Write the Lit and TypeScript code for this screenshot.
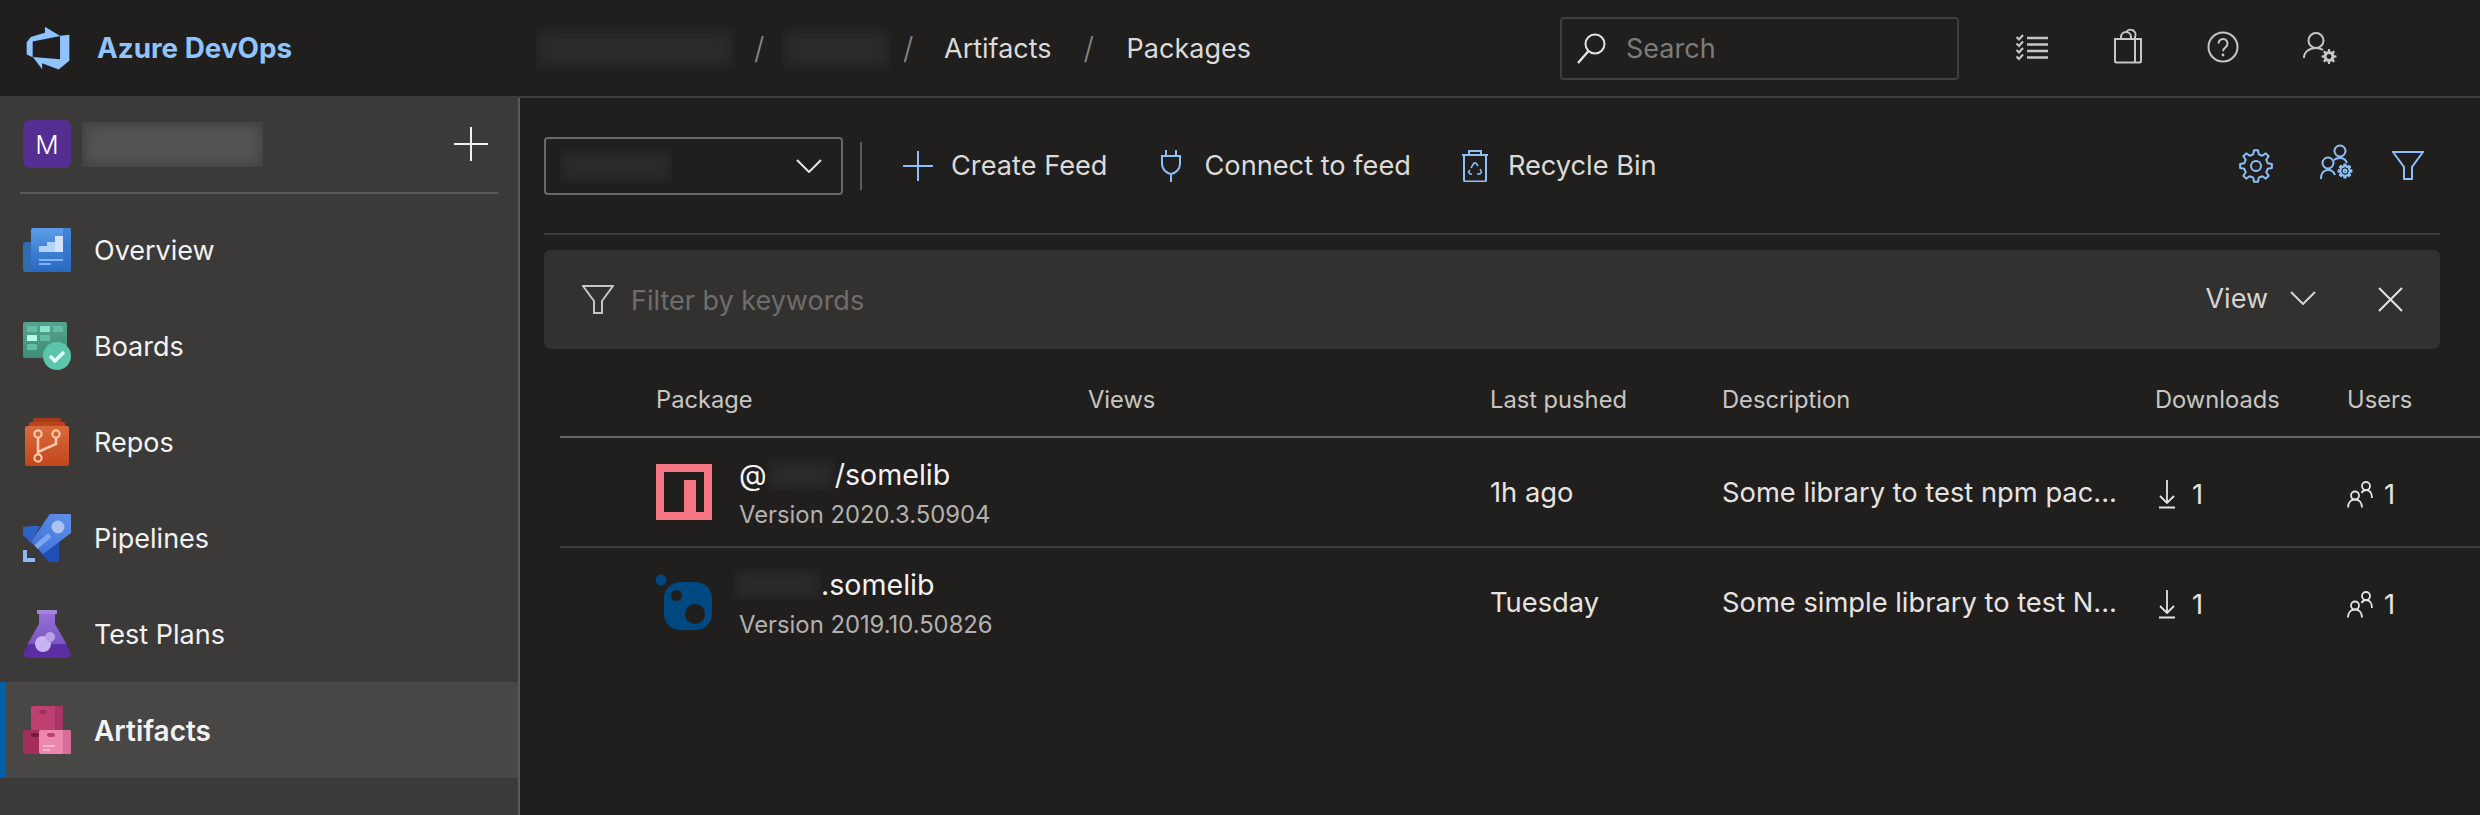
import { LitElement, css, html, svg } from 'lit';
import { customElement } from 'lit/decorators.js';

// outline of a cog, used by the settings style icons
function gear(cx: number, cy: number, outer: number, inner: number, teeth: number) {
  const step = (Math.PI * 2) / teeth;
  let d = '';
  for (let i = 0; i < teeth; i++) {
    const a = i * step - Math.PI / 2;
    const pts: [number, number][] = [
      [a - step * 0.3, inner],
      [a - step * 0.16, outer],
      [a + step * 0.16, outer],
      [a + step * 0.3, inner],
    ];
    for (const [ang, r] of pts) {
      d += `${d ? 'L' : 'M'}${(cx + Math.cos(ang) * r).toFixed(2)} ${(cy + Math.sin(ang) * r).toFixed(2)}`;
    }
  }
  return d + 'Z';
}

const overviewIcon = svg`
  <svg width="48" height="48" viewBox="0 0 48 48">
    <defs><linearGradient id="ov" x1="0" y1="0" x2="0" y2="1"><stop offset="0" stop-color="#5b9de8"/><stop offset="1" stop-color="#2867c0"/></linearGradient></defs>
    <rect x="0" y="16" width="14" height="30" rx="3" fill="#2f6db2"/>
    <rect x="8" y="2" width="40" height="44" rx="2" fill="url(#ov)"/>
    <path d="M40 2h6a2 2 0 0 1 2 2v40a2 2 0 0 1-2 2h-6z" fill="#2f6fc4" opacity=".55"/>
    <path d="M16 20h8v-4h8v-6h8v16H16z" fill="#b4d3f8"/>
    <path d="M32 10h8v16h-8z" fill="#cfe3fb"/>
    <rect x="16" y="33" width="24" height="2" fill="#7fb2ef"/>
    <rect x="16" y="37" width="12" height="2" fill="#7fb2ef"/>
  </svg>`;

const boardsIcon = svg`
  <svg width="48" height="48" viewBox="0 0 48 48">
    <defs><linearGradient id="bo" x1="0" y1="0" x2="0" y2="1"><stop offset="0" stop-color="#56a48e"/><stop offset="1" stop-color="#3f8d78"/></linearGradient></defs>
    <rect x="0" y="0" width="44" height="36" rx="2" fill="url(#bo)"/>
    <rect x="4" y="4" width="10" height="6" fill="#62bba4"/>
    <rect x="17" y="4" width="10" height="6" fill="#8ae3cf"/>
    <rect x="30" y="4" width="10" height="6" fill="#62bba4"/>
    <rect x="4" y="13" width="10" height="6" fill="#b2fbe9"/>
    <rect x="17" y="13" width="10" height="6" fill="#62bba4"/>
    <rect x="4" y="22" width="10" height="6" fill="#62bba4"/>
    <circle cx="34" cy="34" r="14" fill="#5cc5ac"/>
    <path d="M27 34l5 5 9-9" fill="none" stroke="#e4fbf4" stroke-width="3.4"/>
  </svg>`;

const reposIcon = svg`
  <svg width="48" height="48" viewBox="0 0 48 48">
    <defs><linearGradient id="re" x1="0" y1="0" x2="0" y2="1"><stop offset="0" stop-color="#d96a3c"/><stop offset="1" stop-color="#c2461c"/></linearGradient></defs>
    <rect x="10" y="0" width="28" height="8" rx="2" fill="#a63b19"/>
    <rect x="6" y="4" width="36" height="8" rx="2" fill="#b8451e"/>
    <rect x="2" y="8" width="44" height="40" rx="2" fill="url(#re)"/>
    <g fill="none" stroke="#f7c6aa" stroke-width="2.2">
      <circle cx="15" cy="16" r="3.6"/>
      <circle cx="33" cy="16" r="3.6"/>
      <circle cx="15" cy="40" r="3.6"/>
      <path d="M15 20v16M33 20v6l-18 8" stroke-width="2.6"/>
    </g>
  </svg>`;

const pipelinesIcon = svg`
  <svg width="48" height="48" viewBox="0 0 48 48">
    <defs><linearGradient id="pi" x1="1" y1="0" x2="0" y2="1"><stop offset="0" stop-color="#5e8fe8"/><stop offset="1" stop-color="#3f72d8"/></linearGradient></defs>
    <path d="M0 13l9-1h8L8 29 0 21z" fill="#2f62c6"/>
    <path d="M17 38l19-18v27a1 1 0 0 1-1 1H26z" fill="#1f50b8"/>
    <path d="M26 1a3 3 0 0 1 2-1h19a1 1 0 0 1 1 1v18L20 40 8 28z" fill="url(#pi)"/>
    <circle cx="35" cy="13" r="6.5" fill="#a9c4f4"/>
    <path d="M13 33l14-12" stroke="#7ea5ee" stroke-width="5"/>
    <path d="M0 36h4v8h8v4H0z" fill="#93b5f3"/>
  </svg>`;

const testIcon = svg`
  <svg width="48" height="48" viewBox="0 0 48 48">
    <defs><linearGradient id="te" x1="0" y1="0" x2="0" y2="1"><stop offset="0" stop-color="#9473d4"/><stop offset="1" stop-color="#7a53c2"/></linearGradient></defs>
    <path d="M16 3h16v11l12 21H4L16 14z" fill="url(#te)"/>
    <rect x="14" y="0" width="20" height="4" fill="#a184dc"/>
    <path d="M5 34h38l4 7a4.500 4.500 0 0 1-4 7H5a4.500 4.500 0 0 1-4-7z" fill="#5b2da2"/>
    <circle cx="20" cy="34" r="8" fill="#c9b4f1"/>
    <circle cx="27" cy="27" r="5" fill="#b8a0e9"/>
  </svg>`;

const artifactsIcon = svg`
  <svg width="48" height="48" viewBox="0 0 48 48">
    <rect x="8" y="0" width="32" height="25" rx="2" fill="#bd4071"/>
    <path d="M32 0h6a2 2 0 0 1 2 2v23h-8z" fill="#a73565"/>
    <rect x="16" y="4" width="8" height="4" rx="2" fill="#9c2f5c"/>
    <rect x="0" y="24" width="20" height="24" rx="2" fill="#a42d5c"/>
    <rect x="8" y="27" width="8" height="4" rx="2" fill="#701c40"/>
    <rect x="16" y="24" width="32" height="24" rx="2" fill="#ec87b0"/>
    <path d="M40 24h6a2 2 0 0 1 2 2v20a2 2 0 0 1-2 2h-6z" fill="#da6c9a"/>
    <rect x="24" y="27" width="8" height="4" rx="2" fill="#b9406f"/>
    <rect x="20" y="39" width="12" height="2" fill="#f9b2cc"/>
    <rect x="20" y="43" width="7" height="2" fill="#f9b2cc"/>
  </svg>`;

const navItems = [
  { label: 'Overview', icon: overviewIcon },
  { label: 'Boards', icon: boardsIcon },
  { label: 'Repos', icon: reposIcon },
  { label: 'Pipelines', icon: pipelinesIcon },
  { label: 'Test Plans', icon: testIcon },
  { label: 'Artifacts', icon: artifactsIcon, selected: true },
];

const chevron = svg`<svg class="chev" width="26" height="14" viewBox="0 0 26 14"><path d="M1 1l12 12L25 1" fill="none" stroke="currentColor" stroke-width="2"/></svg>`;

const funnel = svg`<svg width="32" height="32" viewBox="0 0 32 32"><path d="M1 2h30L20 17v12h-8V17z" fill="none" stroke="currentColor" stroke-width="2"/></svg>`;

const npmIcon = svg`
  <svg width="56" height="56" viewBox="0 0 56 56">
    <path d="M0 0h56v56H0zM8 8v40h20V16h12v32h8V8z" fill="#f67683" fill-rule="evenodd"/>
  </svg>`;

const nugetIcon = svg`
  <svg width="56" height="56" viewBox="0 0 56 56">
    <circle cx="5" cy="6" r="5.500" fill="#004880"/>
    <path d="M24 8h16a16 16 0 0 1 16 16v16a16 16 0 0 1-16 16H24A16 16 0 0 1 8 40V24A16 16 0 0 1 24 8zM20.500 16a5.500 5.500 0 1 0 0 11 5.500 5.500 0 0 0 0-11zM39 30a10 10 0 1 0 0 20 10 10 0 0 0 0-20z" fill="#004880" fill-rule="evenodd"/>
  </svg>`;

const downloadIcon = svg`
  <svg width="24" height="30" viewBox="0 0 24 30">
    <path d="M12 1v23M5 17l7 7 7-7" fill="none" stroke="currentColor" stroke-width="1.800"/>
    <path d="M4 28.500h16" stroke="currentColor" stroke-width="2"/>
  </svg>`;

const usersIcon = svg`
  <svg width="26" height="28" viewBox="0 0 26 28">
    <g fill="none" stroke="currentColor" stroke-width="1.800">
      <circle cx="19" cy="6" r="4"/>
      <path d="M14.500 13c1-2 2.500-3 4.500-3 3.500 0 6 3 6 8"/>
      <circle cx="8" cy="15.500" r="4"/>
      <path d="M1 27.500c0-5 3-8 7-8s7 3 7 8"/>
    </g>
  </svg>`;

const rows = [
  {
    icon: npmIcon,
    name: html`<span>@</span><span class="blur blur-scope"></span><span>/somelib</span>`,
    version: 'Version 2020.3.50904',
    pushed: '1h ago',
    description: 'Some library to test npm pac...',
  },
  {
    icon: nugetIcon,
    name: html`<span class="blur blur-org"></span><span>.somelib</span>`,
    version: 'Version 2019.10.50826',
    pushed: 'Tuesday',
    description: 'Some simple library to test N...',
  },
];

@customElement('app-root')
export class AppRoot extends LitElement {
  static get styles() {
    return css`
      :host {
        display: block;
        width: 2480px;
        height: 815px;
        overflow: hidden;
        background: #201f1e;
        color: #e6e4e2;
        font-family: Inter, "Liberation Sans", sans-serif;
        font-size: 27px;
      }

      svg {
        display: block;
        flex: none;
      }

      .blur {
        display: block;
        flex: none;
        background: #2c2b2a;
        box-shadow: inset 0 0 12px 4px #222120;
      }

      /* top bar */
      .topbar {
        display: flex;
        align-items: center;
        height: 96px;
        border-bottom: 2px solid #3d3c3b;
      }

      .brand {
        display: flex;
        align-items: center;
        gap: 25px;
        width: 511px;
        padding-left: 24px;
        color: #90c4ff;
        font-weight: 700;
        font-size: 27.8px;
      }

      .crumbs {
        display: flex;
        align-items: center;
        width: 1025px;
        color: #dcdad8;
      }

      .blur-crumb-a { width: 200px; height: 41px; }
      .blur-crumb-b { width: 109px; height: 41px; }

      .sep {
        width: 10px;
        text-align: center;
        color: #8a8886;
        font-weight: 300;
        font-size: 30px;
      }

      .sep-a { margin: 0 18px 0 19px; }
      .sep-b { margin: 0 31px 0 12px; }
      .sep-c { margin: 0 33px 0 32px; }

      .search {
        display: flex;
        align-items: center;
        gap: 18px;
        box-sizing: border-box;
        width: 399px;
        height: 63px;
        padding-left: 14px;
        border: 2px solid #403f3e;
        border-radius: 4px;
        color: #7d7b79;
      }

      .search svg {
        color: #e6e4e2;
      }

      .top-icons {
        display: flex;
        margin-left: 25px;
        color: #c8c6c4;
      }

      .top-icons > div {
        display: flex;
        justify-content: center;
        width: 96px;
      }

      /* below the top bar */
      .body {
        display: flex;
        height: 717px;
      }

      .side {
        flex: none;
        width: 518px;
        background: #3b3a39;
        border-right: 2px solid #5c5b5a;
      }

      .team {
        display: flex;
        align-items: center;
        height: 48px;
        padding: 22px 30px 0 23px;
      }

      .avatar {
        display: flex;
        align-items: center;
        justify-content: center;
        flex: none;
        width: 48px;
        height: 48px;
        border-radius: 7px;
        background: #552e91;
        color: #fff;
        font-size: 26px;
        font-weight: 300;
      }

      .blur-team {
        width: 181px;
        height: 45px;
        margin-left: 11px;
        background: #555453;
        box-shadow: inset 0 0 12px 4px #434241;
      }

      .add {
        margin-left: auto;
        color: #f3f2f1;
      }

      .side-rule {
        width: 478px;
        height: 2px;
        margin: 24px 0 8px 20px;
        background: #5c5b5a;
      }

      .nav-item {
        display: flex;
        align-items: center;
        gap: 23px;
        height: 96px;
        padding-left: 23px;
        color: #f3f2f1;
      }

      .nav-item span {
        padding-top: 1px;
      }

      .nav-item.selected {
        padding-left: 17px;
        border-left: 6px solid #0060a9;
        background: #484746;
        font-size: 28px;
        font-weight: 600;
      }

      /* main column */
      .main {
        flex: 1;
        min-width: 0;
      }

      .toolbar {
        display: flex;
        align-items: center;
        height: 135px;
        margin: 0 40px 0 24px;
        padding-right: 16px;
        border-bottom: 2px solid #3d3c3b;
        color: #dcdad8;
        font-size: 27.2px;
      }

      .picker {
        display: flex;
        align-items: center;
        justify-content: space-between;
        box-sizing: border-box;
        width: 299px;
        height: 58px;
        padding: 0 19px 0 13px;
        border: 2px solid #6a6967;
        border-radius: 4px;
        color: #e6e4e2;
      }

      .blur-feed { width: 114px; height: 34px; }

      .tool-sep {
        width: 2px;
        height: 48px;
        margin: 0 40px 0 17px;
        background: #5c5b5a;
      }

      .tools {
        display: flex;
        gap: 48px;
      }

      .tool {
        display: flex;
        align-items: center;
        gap: 17px;
      }

      .tool svg, .tool-icons {
        color: #8dc0f8;
      }

      .tool-icons {
        display: flex;
        align-items: center;
        gap: 32px;
        margin-left: auto;
      }

      .filter-bar {
        display: flex;
        align-items: center;
        height: 99px;
        margin: 15px 40px 0 24px;
        padding: 0 37px 0 38px;
        border-radius: 6px;
        background: #323130;
      }

      .filter-bar > svg:first-child {
        color: #c8c6c4;
        margin-right: 17px;
      }

      .placeholder {
        padding-top: 2px;
        color: #6f6d6b;
      }

      .view {
        display: flex;
        align-items: center;
        gap: 22px;
        margin-left: auto;
        margin-right: 62px;
        padding-bottom: 3px;
        color: #d6d4d2;
      }

      .close {
        color: #e6e4e2;
      }

      .table {
        margin: 1px 0 0 40px;
      }

      .row {
        display: grid;
        grid-template-columns: 96px 432px 402px 232px 433px 192px 1fr;
        align-items: center;
      }

      .row.head {
        height: 74px;
        padding-top: 12px;
        border-bottom: 2px solid #666564;
        color: #c8c6c4;
        font-size: 23.7px;
      }

      .row.item {
        height: 108px;
        font-size: 27.3px;
      }

      .row.item + .row.item {
        border-top: 2px solid #3d3c3b;
      }

      .package {
        display: flex;
        align-items: center;
        gap: 27px;
      }

      .names {
        margin-top: 5px;
      }

      .name {
        display: flex;
        align-items: center;
        height: 36px;
        color: #f3f2f1;
        font-size: 28.6px;
      }

      .version {
        height: 36px;
        margin-top: 5px;
        line-height: 36px;
        color: #b3b1af;
        font-size: 23.8px;
      }

      .blur-scope { width: 68px; height: 31px; }
      .blur-org { width: 87px; height: 31px; margin-left: -5px; }

      .count {
        display: flex;
        align-items: center;
        gap: 13px;
        padding-top: 4px;
      }

      .count.users {
        gap: 11px;
      }
    `;
  }

  private renderTopIcons() {
    return html`
      <div class="top-icons">
        <div>
          <svg width="48" height="48" viewBox="0 0 48 48">
            <path d="M19 14h21M19 20.500h21M19 27h21M19 33.500h21" stroke="currentColor" stroke-width="2.600"/>
            <path d="M8.500 13l2.500 2.500 4-4.500M8.500 19.500l2.500 2.500 4-4.500M8.500 26l2.500 2.500 4-4.500M8.500 32.500l2.500 2.500 4-4.500" fill="none" stroke="currentColor" stroke-width="2.200"/>
          </svg>
        </div>
        <div>
          <svg width="48" height="48" viewBox="0 0 48 48">
            <g fill="none" stroke="currentColor" stroke-width="2">
              <path d="M11 15h26v22a1.500 1.500 0 0 1-1.500 1.500h-23A1.500 1.500 0 0 1 11 37z"/>
              <path d="M31 15v23.500"/>
              <path d="M17 15v-2a5 5 0 0 1 10 0v2M22 8.500a5 5 0 0 1 9 4.500v2"/>
            </g>
          </svg>
        </div>
        <div>
          <svg width="48" height="48" viewBox="0 0 48 48">
            <circle cx="23" cy="23" r="14.500" fill="none" stroke="currentColor" stroke-width="2"/>
            <path d="M18.500 19.500a4.500 4.500 0 1 1 7.200 3.600c-1.700 1.300-2.700 2-2.700 4.200" fill="none" stroke="currentColor" stroke-width="2"/>
            <circle cx="23" cy="31" r="1.400" fill="currentColor"/>
          </svg>
        </div>
        <div>
          <svg width="48" height="48" viewBox="0 0 48 48">
            <circle cx="20" cy="16.500" r="7.500" fill="none" stroke="currentColor" stroke-width="2"/>
            <path d="M8 34c0-6 5-10 12-10 3 0 5 .6 7 2" fill="none" stroke="currentColor" stroke-width="2"/>
            <path d="${gear(33, 32.500, 7.500, 5.500, 8)}" fill="currentColor"/>
            <circle cx="33" cy="32.500" r="2.400" fill="#201f1e"/>
          </svg>
        </div>
      </div>
    `;
  }

  private renderToolbar() {
    return html`
      <div class="toolbar">
        <div class="picker">
          <span class="blur blur-feed"></span>
          ${chevron}
        </div>
        <div class="tool-sep"></div>
        <div class="tools">
          <div class="tool">
            <svg width="32" height="32" viewBox="0 0 32 32"><path d="M16 1v30M1 16h30" stroke="currentColor" stroke-width="2"/></svg>
            <span>Create Feed</span>
          </div>
          <div class="tool">
            <svg width="32" height="32" viewBox="0 0 32 32">
              <path d="M11 0v6M21 0v6M7 6h18v8c0 5-4 9-9 10-5-1-9-5-9-10zM16 24v8" fill="none" stroke="currentColor" stroke-width="2"/>
            </svg>
            <span>Connect to feed</span>
          </div>
          <div class="tool">
            <svg width="32" height="32" viewBox="0 0 32 32">
              <g fill="none" stroke="currentColor" stroke-width="2">
                <path d="M3 5h26M10 5V1h12v4M5 5v25a1.500 1.500 0 0 0 1.500 1.500h19A1.500 1.500 0 0 0 27 30V5"/>
                <path d="M12 18l3-5h2l2 3M21 19l1.500 3-1.500 2h-3M13 24h-2l-1.500-2 1.500-2" stroke-width="1.500"/>
              </g>
            </svg>
            <span>Recycle Bin</span>
          </div>
        </div>
        <div class="tool-icons">
          <svg width="48" height="48" viewBox="0 0 48 48">
            <path d="${gear(24, 24, 16, 12, 8)}" fill="none" stroke="currentColor" stroke-width="2" stroke-linejoin="round"/>
            <circle cx="24" cy="24" r="5" fill="none" stroke="currentColor" stroke-width="2"/>
          </svg>
          <svg width="48" height="48" viewBox="0 0 48 48">
            <g fill="none" stroke="currentColor" stroke-width="2">
              <circle cx="28" cy="9" r="5.500"/>
              <path d="M22 18c1.500-1.500 3.500-2 6-2 4 0 6 2 7 5"/>
              <circle cx="16" cy="21" r="5.500"/>
              <path d="M9 37c0-6 3-9 7-9s6 2 7 5"/>
              <path d="${gear(33, 29, 6.500, 4.500, 8)}" stroke-linejoin="round"/>
              <circle cx="33" cy="29" r="1.500"/>
            </g>
          </svg>
          ${funnel}
        </div>
      </div>
    `;
  }

  render() {
    return html`
      <div class="topbar">
        <div class="brand">
          <svg width="48" height="48" viewBox="0 0 18 18">
            <path d="M17 4v9.740l-4 3.280-6.200-2.260V17l-3.510-4.590 10.230.8V4.440zm-3.410.49L7.850 1v2.290L2.580 4.840 1 6.870v4.610l2.260 1V6.570z" fill="currentColor"/>
          </svg>
          <span>Azure DevOps</span>
        </div>
        <div class="crumbs">
          <span class="blur blur-crumb-a"></span>
          <span class="sep sep-a">/</span>
          <span class="blur blur-crumb-b"></span>
          <span class="sep sep-b">/</span>
          <span>Artifacts</span>
          <span class="sep sep-c">/</span>
          <span>Packages</span>
        </div>
        <div class="search">
          <svg width="32" height="32" viewBox="0 0 32 32">
            <circle cx="19" cy="12" r="9.500" fill="none" stroke="currentColor" stroke-width="2"/>
            <path d="M12.500 19L2 31" stroke="currentColor" stroke-width="2.400"/>
          </svg>
          <span>Search</span>
        </div>
        ${this.renderTopIcons()}
      </div>

      <div class="body">
        <div class="side">
          <div class="team">
            <div class="avatar">M</div>
            <span class="blur blur-team"></span>
            <svg class="add" width="34" height="34" viewBox="0 0 34 34"><path d="M17 0v34M0 17h34" stroke="currentColor" stroke-width="2"/></svg>
          </div>
          <div class="side-rule"></div>
          ${navItems.map(item => html`
            <div class="nav-item ${item.selected ? 'selected' : ''}">
              ${item.icon}
              <span>${item.label}</span>
            </div>
          `)}
        </div>

        <div class="main">
          ${this.renderToolbar()}

          <div class="filter-bar">
            ${funnel}
            <span class="placeholder">Filter by keywords</span>
            <div class="view">
              <span>View</span>
              ${chevron}
            </div>
            <svg class="close" width="25" height="25" viewBox="0 0 25 25"><path d="M1 1l23 23M24 1L1 24" stroke="currentColor" stroke-width="2"/></svg>
          </div>

          <div class="table">
            <div class="row head">
              <span></span>
              <span>Package</span>
              <span>Views</span>
              <span>Last pushed</span>
              <span>Description</span>
              <span>Downloads</span>
              <span>Users</span>
            </div>
            ${rows.map(row => html`
              <div class="row item">
                <span></span>
                <div class="package">
                  ${row.icon}
                  <div class="names">
                    <div class="name">${row.name}</div>
                    <div class="version">${row.version}</div>
                  </div>
                </div>
                <span></span>
                <span>${row.pushed}</span>
                <span>${row.description}</span>
                <div class="count">${downloadIcon}<span>1</span></div>
                <div class="count users">${usersIcon}<span>1</span></div>
              </div>
            `)}
          </div>
        </div>
      </div>
    `;
  }
}
